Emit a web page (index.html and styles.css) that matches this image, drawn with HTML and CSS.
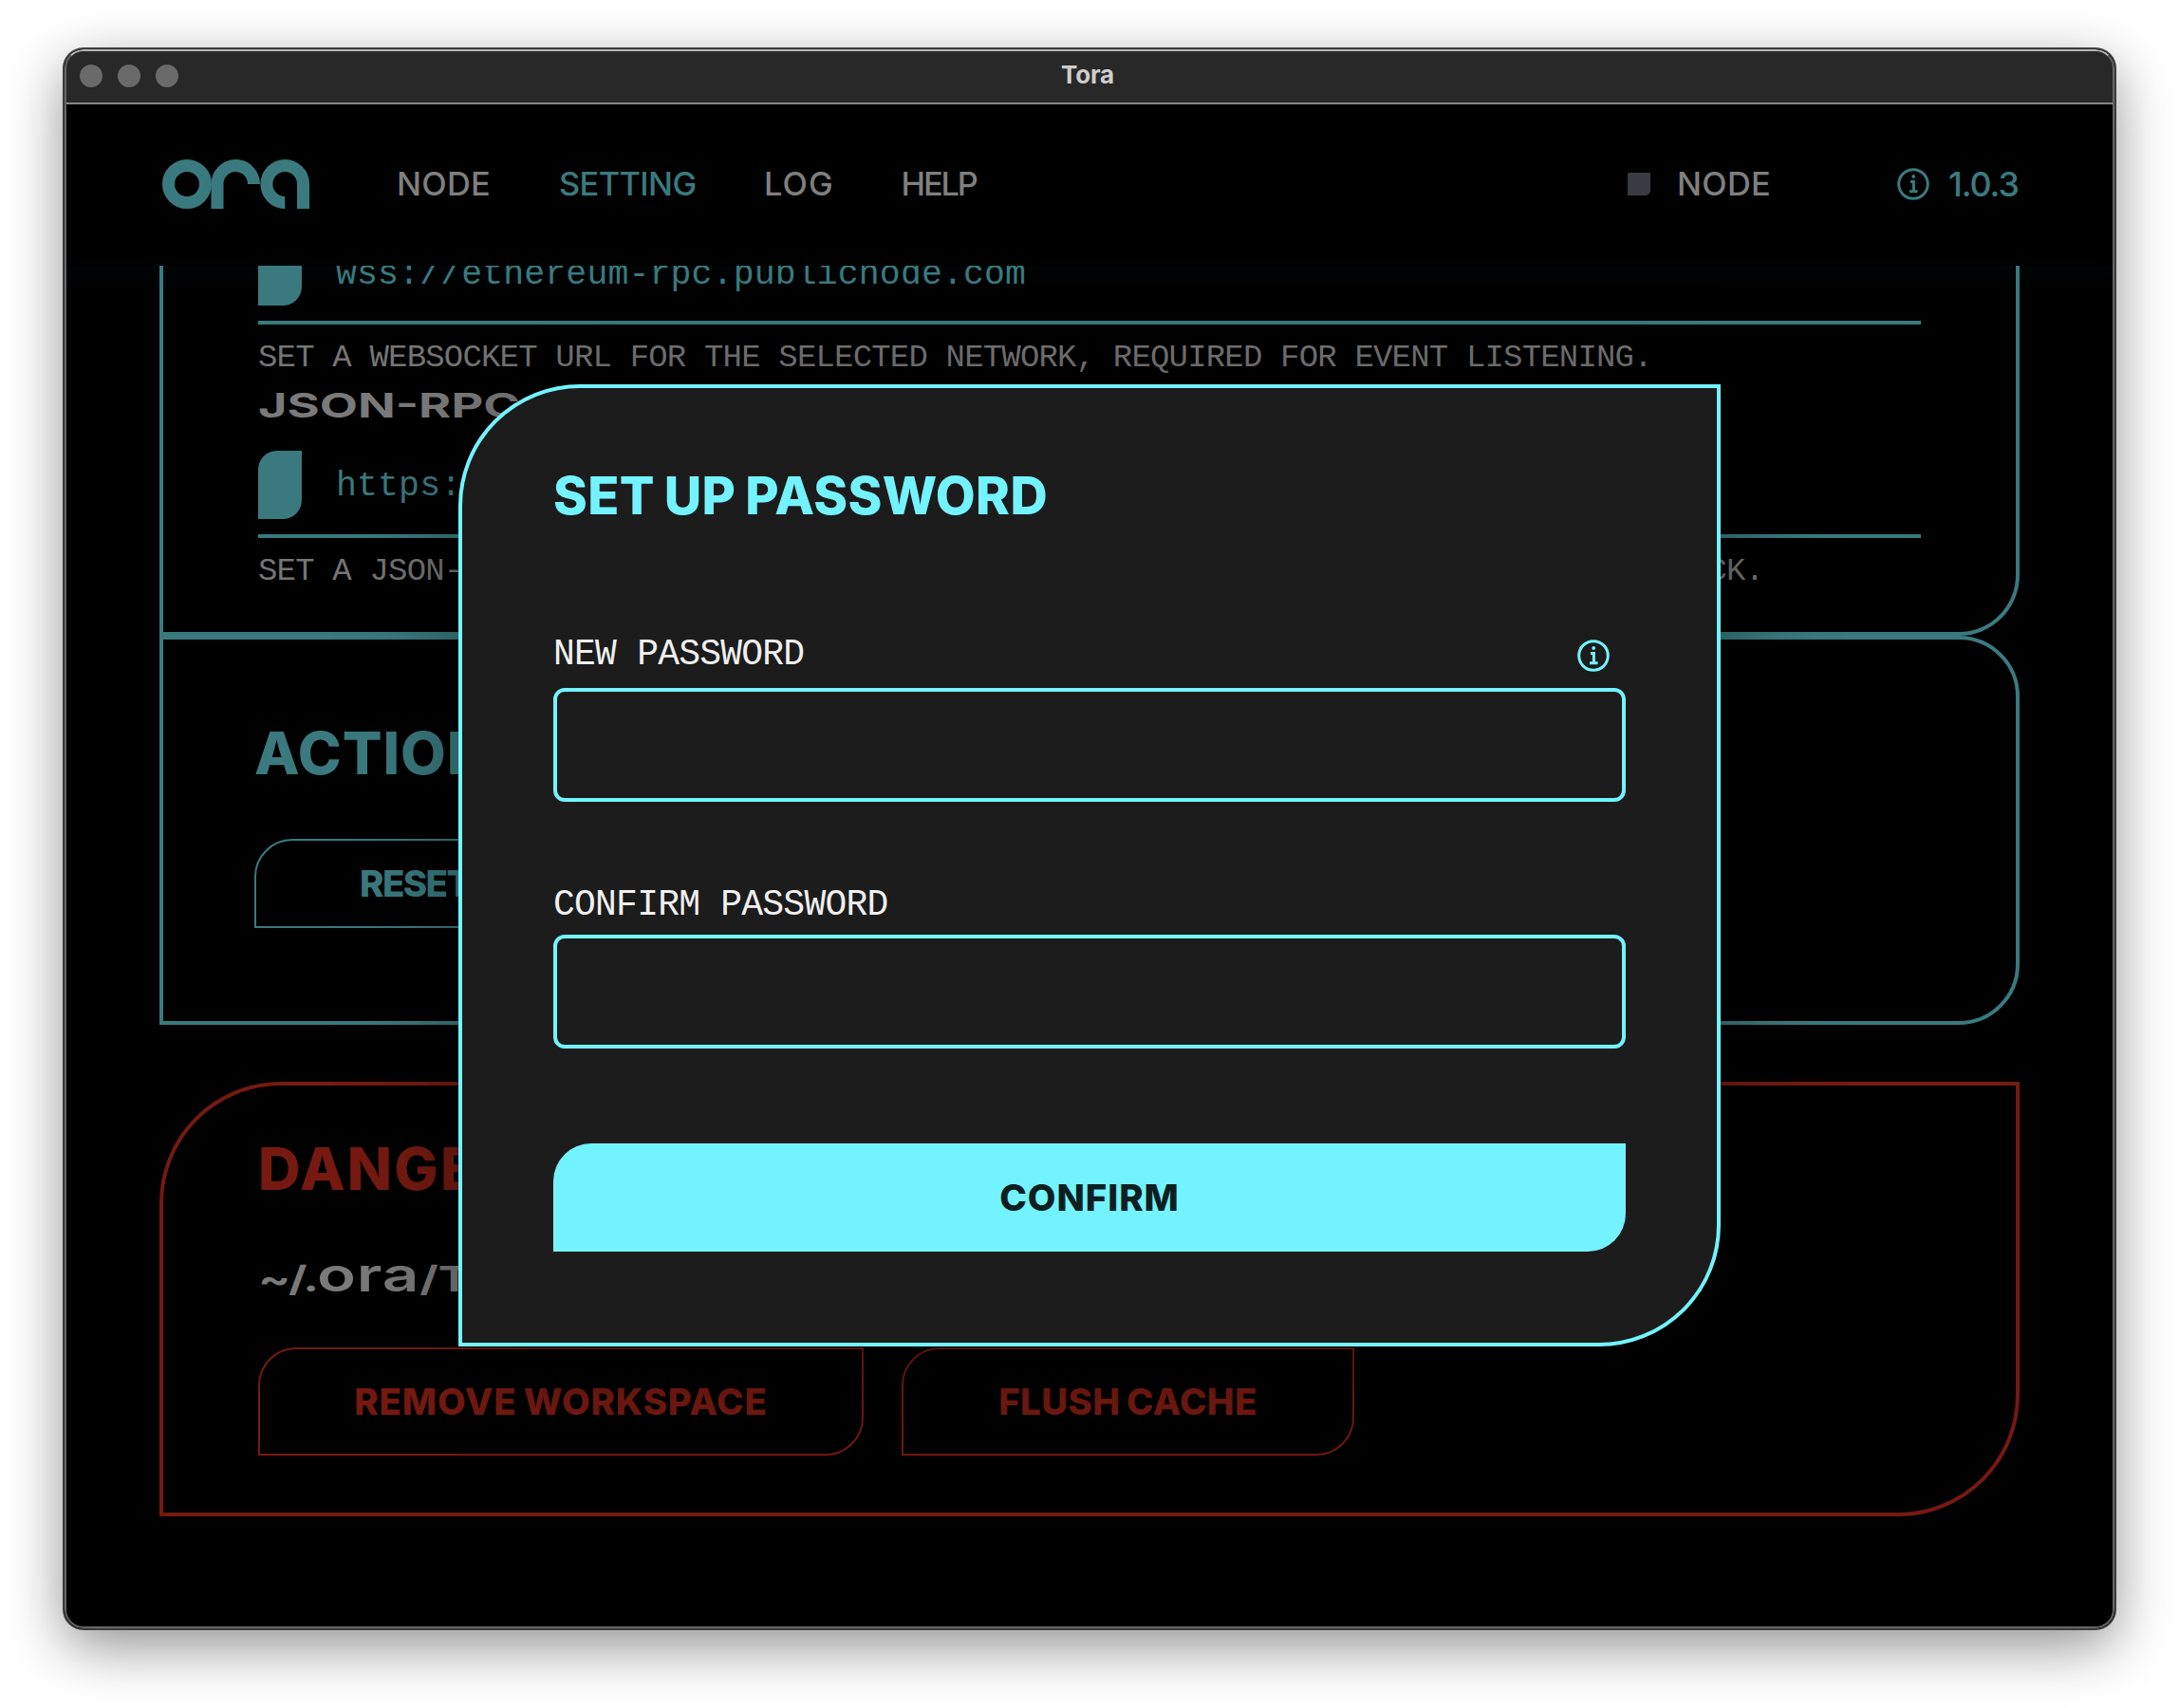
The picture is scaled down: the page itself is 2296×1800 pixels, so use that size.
FILE: index.html
```html
<!DOCTYPE html>
<html lang="en">
<head>
<meta charset="utf-8">
<title>Tora</title>
<link rel="stylesheet" href="styles.css">
</head>
<body>
<div class="window">
  <div class="titlebar">
    <div class="lights"><i class="light"></i><i class="light"></i><i class="light"></i></div>
    <div class="window-title">Tora</div>
  </div>

  <header class="header">
    <svg class="logo" width="155" height="52" viewBox="0 0 155 52" fill="none" stroke="currentColor" stroke-width="13">
      <circle cx="26" cy="26" r="19.5"/>
      <path d="M58 52V26a19.25 19.5 0 0 1 38.5 0"/>
      <path d="M129.3 45.5a19.3 19.5 0 1 1 19.2-19.5V52"/>
    </svg>
    <nav class="nav">
      <a class="nav-item">NODE</a>
      <a class="nav-item active">SETTING</a>
      <a class="nav-item log">LOG</a>
      <a class="nav-item help">HELP</a>
    </nav>
    <div class="header-side">
      <div class="status"><i class="status-mark"></i><span>NODE</span></div>
      <div class="version">
        <svg class="info" width="34" height="34" viewBox="0 0 34 34" fill="none" stroke="currentColor" stroke-width="3">
          <circle cx="17" cy="17" r="15.3"/>
          <circle cx="17.2" cy="9" r="1.9" fill="currentColor" stroke="none"/>
          <path d="M14 14.6h3.4v10.2M13 24.8h8.6"/>
        </svg>
        <span class="version-number">1.0.3</span>
      </div>
    </div>
  </header>

  <main class="page">
    <section class="panel network">
      <div class="field"><i class="chip"></i><span class="url">wss://ethereum-rpc.publicnode.com</span></div>
      <p class="hint">SET A WEBSOCKET URL FOR THE SELECTED NETWORK, REQUIRED FOR EVENT LISTENING.</p>
      <h3 class="subheading"><span class="wide">JSON-RPC</span></h3>
      <div class="field"><i class="chip"></i><span class="url url-json">https://</span></div>
      <p class="hint">SET A JSON-RPC URL FOR THE SELECTED NETWORK, REQUIRED FOR EXECUTING THE CALLBACK.</p>
    </section>

    <section class="panel actions">
      <h2 class="heading">ACTION</h2>
      <button class="button reset">RESET</button>
    </section>

    <section class="panel danger">
      <h2 class="heading danger-heading">DANGER</h2>
      <p class="path"><span class="path-text"><span class="small root">~/.</span><span class="dir">ora</span><span class="small">/T</span></span></p>
      <div class="button-row">
        <button class="button remove">REMOVE WORKSPACE</button>
        <button class="button flush">FLUSH CACHE</button>
      </div>
    </section>
  </main>

  <div class="overlay">
    <form class="modal">
      <h1 class="modal-title">SET UP PASSWORD</h1>
      <label class="label" for="new-password">
        <span>NEW PASSWORD</span>
        <svg class="info" width="34" height="34" viewBox="0 0 34 34" fill="none" stroke="currentColor" stroke-width="3">
          <circle cx="17" cy="17" r="15.3"/>
          <circle cx="17.2" cy="9" r="1.9" fill="currentColor" stroke="none"/>
          <path d="M14 14.6h3.4v10.2M13 24.8h8.6"/>
        </svg>
      </label>
      <input class="input" id="new-password" type="password">
      <label class="label label-confirm" for="confirm-password"><span>CONFIRM PASSWORD</span></label>
      <input class="input" id="confirm-password" type="password">
      <button class="confirm" type="button">CONFIRM</button>
    </form>
  </div>
</div>
</body>
</html>
```

FILE: styles.css
```css
* { box-sizing: border-box; margin: 0; padding: 0; }

:root {
  --cyan: #73f3ff;
  --teal: #3a7a7f;
  --red: #761a11;
  --grey: #7f7f7f;
}

body {
  width: 2296px;
  height: 1800px;
  padding: 52px 68px;
  overflow: hidden;
  background: #fff;
  font-family: Inter, sans-serif;
}

.window {
  position: relative;
  display: flex;
  flex-direction: column;
  width: 2160px;
  height: 1664px;
  overflow: hidden;
  border-radius: 20px;
  background: #000;
  box-shadow: 0 0 0 2px #3a3c3c, 0 18px 60px rgba(0, 0, 0, .45);
}

/* Light hairline along the inside of the window edge */
.window::after {
  content: "";
  position: absolute;
  inset: 0;
  border: 2px solid #666;
  border-top-color: #b4b4b4;
  border-radius: 20px;
  pointer-events: none;
}

.titlebar {
  display: flex;
  align-items: center;
  flex: none;
  height: 58px;
  padding-left: 16px;
  border-bottom: 2px solid #868686;
  background: #282828;
}

.lights { display: flex; gap: 16px; }
.light { width: 24px; height: 24px; border-radius: 50%; background: #6a6a6a; }

.window-title {
  width: 1916px;
  padding-bottom: 3px;
  text-align: center;
  font-size: 26px;
  font-weight: 700;
  line-height: 51px;
  letter-spacing: -.2px;
  color: #cdcdcd;
}

.header {
  display: flex;
  align-items: center;
  flex: none;
  height: 170px;
  padding: 0 100px 2px 102px;
  font-size: 34.4px;
  font-weight: 500;
  line-height: 50px;
  color: var(--grey);
}

.logo { flex: none; margin-left: .5px; color: var(--teal); }

.nav {
  display: grid;
  grid-template-columns: 171px 216px 144.5px auto;
  margin-left: 92.5px;
}

.nav-item { letter-spacing: .28px; }
.nav-item.active { letter-spacing: -.63px; color: var(--teal); }
.nav-item.log { letter-spacing: 1.09px; }
.nav-item.help { letter-spacing: -2.15px; }

.header-side { display: flex; width: 413px; margin-left: auto; }
.status { display: flex; align-items: center; gap: 28px; width: 284px; letter-spacing: .28px; }
.status-mark { width: 24px; height: 24px; border-radius: 2px 0 5px 0; background: #393b42; }
.version { display: flex; align-items: center; gap: 20px; color: var(--teal); }
.version-number { font-size: 35.8px; letter-spacing: -1.1px; }
.info { flex: none; }

.page {
  flex: 1;
  overflow: hidden;
  padding: 0 100px;
  background: linear-gradient(#000506, #000 24px);
}

.panel { border: 4px solid var(--teal); }

/* Scrolled so that its top edge lies under the header */
.network {
  height: 420px;
  margin-top: -30px;
  padding: 0 100px;
  border-top: 0;
  border-bottom-right-radius: 64px;
}

.field {
  display: flex;
  gap: 36px;
  height: 92px;
  border-bottom: 4px solid var(--teal);
}

.chip { width: 46px; height: 72px; border-radius: 20px 0; background: var(--teal); }

.url {
  padding-top: 4px;
  font: 36.5px/72px "Liberation Mono", monospace;
  letter-spacing: .13px;
  color: var(--teal);
}

.url-json { padding-top: 2px; }

.hint {
  margin-top: 15px;
  font: 34px/40px "Liberation Mono", monospace;
  letter-spacing: -.82px;
  white-space: nowrap;
  color: #757575;
}

.subheading { height: 78px; font-size: 36px; line-height: 60px; color: #7a7a7a; }
.wide { display: inline-block; transform: scaleX(1.45); transform-origin: left; }

.actions {
  height: 410px;
  padding: 71.5px 96px 0;
  border-radius: 0 64px 64px 0;
}

.heading {
  font-size: 61.9px;
  font-weight: 800;
  line-height: 96px;
  letter-spacing: .9px;
  color: var(--teal);
}

.button {
  border: 2px solid currentColor;
  border-radius: 40px 0;
  background: none;
  font: 800 38.5px/1 Inter, sans-serif;
  word-spacing: -2px;
  white-space: nowrap;
}

.reset {
  display: block;
  width: 520px;
  height: 94px;
  margin-top: 42.5px;
  padding-left: 109px;
  text-align: left;
  letter-spacing: -1.6px;
  color: var(--teal);
}

.danger {
  height: 458px;
  margin-top: 60px;
  padding: 39.5px 100px 0;
  border-color: var(--red);
  border-radius: 128px 0;
}

.danger-heading { letter-spacing: 2.1px; color: var(--red); }

.path {
  height: 107px;
  margin-top: 33.5px;
  font-size: 49.5px;
  font-weight: 700;
  line-height: 60px;
  color: #7a7a7a;
}

.path-text { display: inline-block; transform: scaleX(1.36); transform-origin: left; white-space: nowrap; }
.small { font-size: 37px; line-height: 1; }
.root { letter-spacing: -1.6px; }
.dir { letter-spacing: .6px; font-weight: 600; }

.button-row { display: flex; gap: 40px; color: var(--red); }
.button-row .button { height: 114px; color: inherit; }
.remove { width: 638px; letter-spacing: .8px; }
.flush { width: 477px; letter-spacing: .3px; }

.overlay {
  position: absolute;
  inset: 58px 0 2px;
  display: flex;
  align-items: center;
  justify-content: center;
}

.modal {
  width: 1330px;
  height: 1014px;
  padding: 71px 96px 0;
  border: 4px solid var(--cyan);
  border-radius: 128px 0;
  background: #1c1c1c;
  box-shadow: 0 20px 120px rgba(0, 0, 0, .4);
}

.modal-title {
  font-size: 54.3px;
  font-weight: 800;
  line-height: 84px;
  letter-spacing: .4px;
  word-spacing: -2.5px;
  color: var(--cyan);
}

.label {
  display: flex;
  align-items: center;
  justify-content: space-between;
  height: 52px;
  margin: 100px 0 9px;
  padding-right: 17px;
  font: 38px/52px "Liberation Mono", monospace;
  letter-spacing: -.77px;
  color: #f0f0f0;
}

.label .info { margin-top: 2px; color: var(--cyan); }
.label-confirm { margin: 83px 0 5px; }

.input {
  display: block;
  width: 100%;
  height: 120px;
  border: 4px solid var(--cyan);
  border-radius: 12px;
  background: none;
}

.confirm {
  display: block;
  width: 100%;
  height: 114px;
  margin-top: 100px;
  border: 0;
  border-radius: 40px 0;
  background: var(--cyan);
  font: 800 38.5px/1 Inter, sans-serif;
  letter-spacing: .9px;
  color: #0e1f21;
}
```
